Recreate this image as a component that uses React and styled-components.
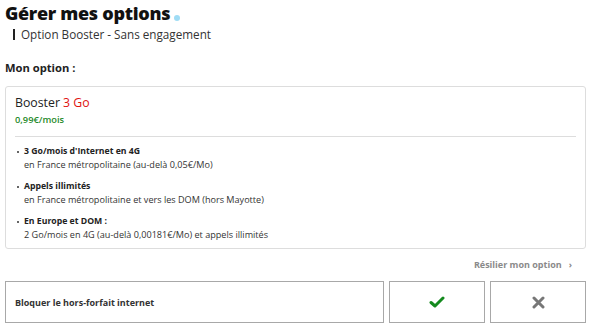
import React from 'react'
import styled, { createGlobalStyle } from 'styled-components'

const Global = createGlobalStyle`
  body {
    margin: 0;
    background: #fff;
    font-family: "Open Sans", "Liberation Sans", sans-serif;
    color: #222;
  }
`;

const Page = styled.div`
  width: 592px;
  padding: 0 6px 0 5px;
  box-sizing: border-box;
`;

const Title = styled.h1`
  margin: 0;
  padding-top: 1px;
  font-size: 18px;
  font-weight: 800;
  line-height: 24px;
  color: #111;
  letter-spacing: -0.3px;
  display: flex;
  align-items: flex-end;
`;

const Dot = styled.span`
  width: 6px;
  height: 6px;
  border-radius: 50%;
  background: #9fdcf5;
  margin: 0 0 4px 4px;
`;

const Subtitle = styled.div`
  margin: 4px 0 0 8px;
  padding-left: 6px;
  border-left: 2px solid #222;
  font-size: 11.7px;
  line-height: 11px;
  color: #333;
`;

const Label = styled.div`
  margin-top: 20px;
  font-size: 11.2px;
  line-height: 15px;
  font-weight: 700;
  color: #222;
`;

const Card = styled.div`
  margin-top: 11px;
  border: 1px solid #ddd;
  border-radius: 3px;
  padding: 9px 9px 9px 9px;
  height: 163px;
  box-sizing: border-box;
`;

const Name = styled.div`
  font-size: 12.3px;
  line-height: 14px;
  color: #222;
  span { color: #e0120f; }
`;

const Price = styled.div`
  margin-top: 3px;
  font-size: 9.3px;
  font-weight: 600;
  color: #1f8a2a;
`;

const Divider = styled.hr`
  margin: 10px 0 0 0;
  border: 0;
  border-top: 1px solid #ddd;
`;

const Features = styled.ul`
  margin: 8px 0 0 0;
  padding: 0;
  list-style: none;
  display: flex;
  flex-direction: column;
  gap: 9px;
`;

const Feature = styled.li`
  position: relative;
  padding-left: 9px;
  font-size: 9.1px;
  line-height: 13px;
  color: #333;
  b { display: block; font-weight: 700; color: #222; font-size: 8.7px; line-height: 13px; }
  &::before {
    content: "";
    position: absolute;
    left: 2px;
    top: 6px;
    width: 2px;
    height: 2px;
    border-radius: 50%;
    background: #333;
  }
`;

const LinkRow = styled.div`
  display: flex;
  justify-content: flex-end;
  margin: 9px 14px 0 0;
  font-size: 9px;
  font-weight: 700;
  color: #8a8a8a;
  gap: 7px;
  line-height: 14px;
`;

const Actions = styled.div`
  display: flex;
  gap: 5px;
  margin-top: 9px;
`;

const Box = styled.div`
  flex: ${p => p.$grow || 'none'};
  width: ${p => p.$w || 'auto'};
  height: 42px;
  box-sizing: border-box;
  border: 1px solid #a8a8a8;
  display: flex;
  align-items: center;
  justify-content: ${p => p.$center ? 'center' : 'flex-start'};
  padding-left: ${p => p.$center ? '0' : '9px'};
  font-size: 9px;
  font-weight: 700;
  color: #333;
`;

const Check = () => (
  <svg width="16" height="12" viewBox="0 0 16 12">
    <path d="M2 6.5 L6 10 L14 2" fill="none" stroke="#148a1e" strokeWidth="3" strokeLinecap="round" strokeLinejoin="round" />
  </svg>
);

const Cross = () => (
  <svg width="13" height="13" viewBox="0 0 13 13">
    <path d="M2 2 L11 11 M11 2 L2 11" fill="none" stroke="#777" strokeWidth="3" strokeLinecap="round" />
  </svg>
);

const features = [
  ['3 Go/mois d\'Internet en 4G', 'en France métropolitaine (au-delà 0,05€/Mo)'],
  ['Appels illimités', 'en France métropolitaine et vers les DOM (hors Mayotte)'],
  ['En Europe et DOM :', '2 Go/mois en 4G (au-delà 0,00181€/Mo) et appels illimités'],
];

export default function App() {
  return (
    <Page>
      <Global />
      <Title>Gérer mes options<Dot /></Title>
      <Subtitle>Option Booster - Sans engagement</Subtitle>
      <Label>Mon option :</Label>
      <Card>
        <Name>Booster <span>3 Go</span></Name>
        <Price>0,99€/mois</Price>
        <Divider />
        <Features>
          {features.map(([title, text]) => (
            <Feature key={title}>
              <b>{title}</b>{text}
            </Feature>
          ))}
        </Features>
      </Card>
      <LinkRow>Résilier mon option <span>›</span></LinkRow>
      <Actions>
        <Box $grow="1">Bloquer le hors-forfait internet</Box>
        <Box $w="96px" $center><Check /></Box>
        <Box $w="96px" $center><Cross /></Box>
      </Actions>
    </Page>
  )
}
